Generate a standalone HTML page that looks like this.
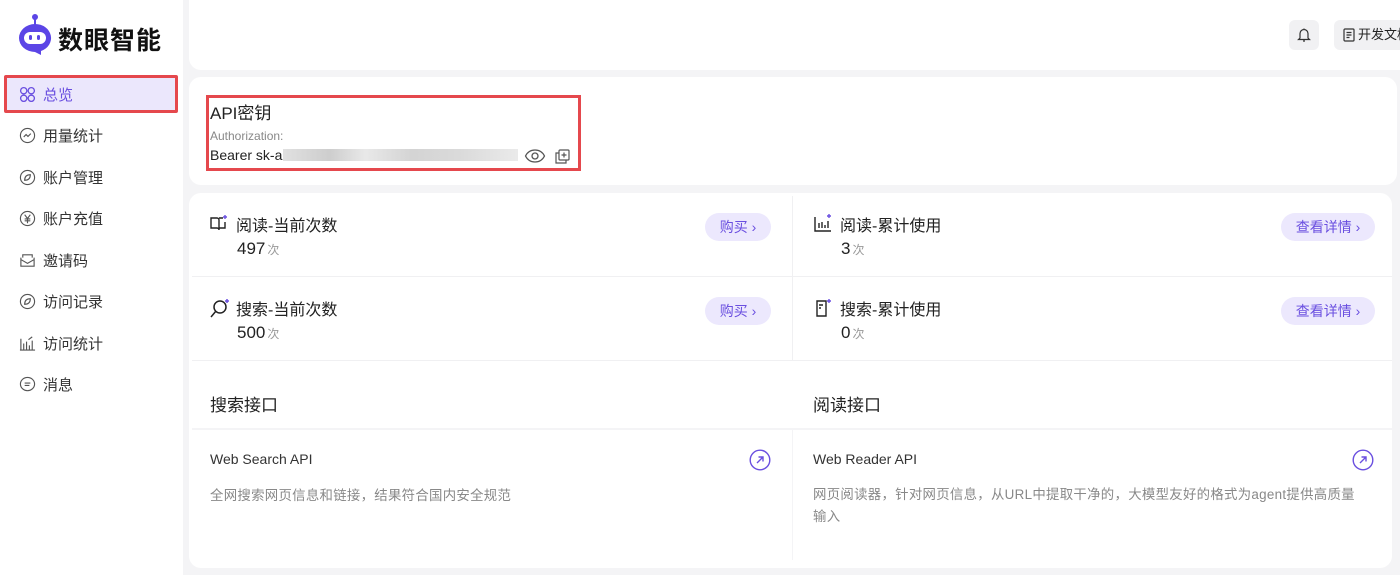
<!DOCTYPE html>
<html><head><meta charset="utf-8"><style>
*{margin:0;padding:0;box-sizing:border-box}
body{width:1400px;height:575px;overflow:hidden;background:#f4f4f6;font-family:"Liberation Sans","Noto Sans CJK SC",sans-serif;color:#222;position:relative}
.abs{position:absolute}
.side{left:0;top:0;width:183px;height:575px;background:#fff}
.nav{position:absolute;left:19px;font-size:15px;color:#333;display:flex;align-items:center;gap:7px}
.nav svg{width:17px;height:17px}
.card{position:absolute;background:#fff;border-radius:12px}
.btn{position:absolute;background:#ece8fd;color:#6a4fe0;font-size:14px;border-radius:14px;height:28px;line-height:28px;text-align:center}
.lbl{position:absolute;font-size:16px;color:#222}
.num{position:absolute;font-size:17px;color:#222}
.num span{font-size:12px;color:#999;margin-left:2px}
.ic{position:absolute}
</style></head><body>
<div class="abs side"></div>
<svg class="abs" style="left:18px;top:13px" width="36" height="42" viewBox="0 0 36 42"><circle cx="17" cy="4" r="3" fill="#5b45e6"/><rect x="16" y="5" width="2" height="7" fill="#5b45e6"/><path d="M17 11a16 14 0 1 0 0 28l6 3v-4a16 14 0 0 0-6-27z" fill="#5b45e6"/><rect x="6" y="19" width="22" height="12" rx="6" fill="#fff"/><rect x="11" y="22" width="3" height="5" rx="1.5" fill="#5b45e6"/><rect x="19" y="22" width="3" height="5" rx="1.5" fill="#5b45e6"/></svg>
<div class="abs" style="left:58px;top:21px;font-size:25px;font-weight:bold;color:#111;letter-spacing:1px">数眼智能</div>
<div class="abs" style="left:4px;top:75px;width:174px;height:38px;background:#ebe7fc;border:3px solid #e5484d;border-radius:2px"></div>
<div class="nav" style="top:84px;color:#6a4fe0"><svg viewBox="0 0 18 18" fill="none" stroke="#6a4fe0" stroke-width="1.4"><circle cx="5" cy="5" r="3.3"/><circle cx="13" cy="5" r="3.3"/><circle cx="5" cy="13" r="3.3"/><circle cx="13" cy="13" r="3.3"/></svg>总览</div>
<div class="nav" style="top:125px"><svg viewBox="0 0 18 18" fill="none" stroke="#555" stroke-width="1.2"><circle cx="9" cy="9" r="7.5"/><path d="M5 10.5l2.5-2.5 2 2 3-3"/></svg>用量统计</div>
<div class="nav" style="top:167px"><svg viewBox="0 0 18 18" fill="none" stroke="#555" stroke-width="1.2"><circle cx="9" cy="9" r="7.5"/><path d="M6 12c0-4 2-6 6-6 0 4-2 6-6 6z"/></svg>账户管理</div>
<div class="nav" style="top:208px"><svg viewBox="0 0 18 18" fill="none" stroke="#555" stroke-width="1.2"><circle cx="9" cy="9" r="7.5"/><path d="M6 5l3 4 3-4M9 9v5M6 9.5h6M6 11.5h6"/></svg>账户充值</div>
<div class="nav" style="top:250px"><svg viewBox="0 0 18 18" fill="none" stroke="#555" stroke-width="1.2"><path d="M2 6v9h14V6M2 8l7 4 7-4M4 6V3h10v3"/></svg>邀请码</div>
<div class="nav" style="top:291px"><svg viewBox="0 0 18 18" fill="none" stroke="#555" stroke-width="1.2"><circle cx="9" cy="9" r="7.5"/><path d="M6 12c0-4 2-6 6-6 0 4-2 6-6 6z"/></svg>访问记录</div>
<div class="nav" style="top:333px"><svg viewBox="0 0 18 18" fill="none" stroke="#555" stroke-width="1.2"><path d="M1 16h16M2 16V4M5 16V9M8 16V7M11 16v-5M14 16V6M10 5l4-3"/></svg>访问统计</div>
<div class="nav" style="top:374px"><svg viewBox="0 0 18 18" fill="none" stroke="#555" stroke-width="1.2"><ellipse cx="9" cy="8.5" rx="7.5" ry="7"/><path d="M6 7.5h6M6 10h5"/></svg>消息</div>

<div class="card" style="left:189px;top:0;width:1230px;height:70px;border-radius:0 0 12px 12px"></div>
<div class="abs" style="left:1289px;top:20px;width:30px;height:30px;background:#f1f1f3;border-radius:6px"></div>
<svg class="abs" style="left:1297px;top:27px" width="14" height="16" viewBox="0 0 14 16" fill="none" stroke="#333" stroke-width="1.2"><path d="M3 11V6.5a4 4 0 0 1 8 0V11l1.5 1.5h-11zM6 14h2M7 1.5v1"/></svg>
<div class="abs" style="left:1334px;top:20px;width:80px;height:30px;background:#f1f1f3;border-radius:6px;font-size:13px;line-height:30px;padding-left:24px">开发文档</div>
<svg class="abs" style="left:1343px;top:28px" width="12" height="14" viewBox="0 0 12 14" fill="none" stroke="#333" stroke-width="1.2"><rect x="1" y="1" width="10" height="12" rx="1"/><path d="M3.5 4.5h5M3.5 7h5M3.5 9.5h3"/></svg>

<div class="card" style="left:189px;top:77px;width:1208px;height:108px"></div>
<div class="abs" style="left:206px;top:95px;width:375px;height:76px;border:3px solid #e5484d"></div>
<div class="abs" style="left:210px;top:99px;font-size:17px;color:#222">API密钥</div>
<div class="abs" style="left:210px;top:129px;font-size:12px;color:#888">Authorization:</div>
<div class="abs" style="left:210px;top:147px;font-size:14px;color:#222">Bearer sk-a</div>
<div class="abs" style="left:283px;top:149px;width:235px;height:12px;background:linear-gradient(90deg,#ddd,#c8c8c8 20%,#e6e6e6 35%,#cfcfcf 55%,#d6d6d6 75%,#e8e8e8);opacity:.9"></div>
<svg class="abs" style="left:524px;top:148px" width="22" height="16" viewBox="0 0 22 16" fill="none" stroke="#555" stroke-width="1.3"><path d="M1.5 8C4 3 8 2 11 2s7 1 9.5 6c-2.5 5-6.5 6-9.5 6S4 13 1.5 8z"/><circle cx="11" cy="8" r="3"/></svg>
<svg class="abs" style="left:555px;top:149px" width="15" height="15" viewBox="0 0 15 15" fill="none" stroke="#555" stroke-width="1.2"><rect x="4" y="1" width="10" height="10" rx="1"/><path d="M4 4H1v10h10v-3M9 3.5v5M6.5 6h5"/></svg>

<div class="card" style="left:189px;top:193px;width:1203px;height:375px"></div>
<div class="abs" style="left:192px;top:276px;width:1200px;height:1px;background:#f0f0f2"></div>
<div class="abs" style="left:192px;top:360px;width:1200px;height:1px;background:#f0f0f2"></div>
<div class="abs" style="left:792px;top:196px;width:1px;height:164px;background:#f0f0f2"></div>
<div class="abs" style="left:192px;top:428px;width:1200px;height:2px;background:#f4f4f6"></div>
<div class="abs" style="left:792px;top:430px;width:1px;height:130px;background:#f4f4f6"></div>

<svg class="ic" style="left:209px;top:214px" width="20" height="20" viewBox="0 0 20 20" fill="none" stroke="#222" stroke-width="1.4"><path d="M2 4h6a2 2 0 0 1 2 2v10a2 2 0 0 0-2-2H2zM14 4h-4M16 8v6h-6M10 6v10"/><path d="M16 1v4M14 3h4" stroke="#6a4fe0"/></svg>
<div class="lbl" style="left:236px;top:212px">阅读-当前次数</div>
<div class="num" style="left:237px;top:239px">497<span>次</span></div>
<div class="btn" style="left:705px;top:213px;width:66px">购买 ›</div>

<svg class="ic" style="left:209px;top:298px" width="22" height="22" viewBox="0 0 22 22" fill="none" stroke="#222" stroke-width="1.5"><circle cx="11" cy="9" r="6"/><path d="M7 13l-5 6"/><path d="M18 1v4M16 3h4" stroke="#6a4fe0"/></svg>
<div class="lbl" style="left:236px;top:296px">搜索-当前次数</div>
<div class="num" style="left:237px;top:323px">500<span>次</span></div>
<div class="btn" style="left:705px;top:297px;width:66px">购买 ›</div>

<svg class="ic" style="left:813px;top:213px" width="20" height="20" viewBox="0 0 20 20" fill="none" stroke="#222" stroke-width="1.4"><path d="M2 4v14h16M6 15v-5M9 15V9M12 15v-3M15 15V8"/><path d="M16 1v4M14 3h4" stroke="#6a4fe0"/></svg>
<div class="lbl" style="left:840px;top:212px">阅读-累计使用</div>
<div class="num" style="left:841px;top:239px">3<span>次</span></div>
<div class="btn" style="left:1281px;top:213px;width:94px">查看详情 ›</div>

<svg class="ic" style="left:814px;top:298px" width="20" height="20" viewBox="0 0 20 20" fill="none" stroke="#222" stroke-width="1.4"><path d="M3 3h9v15H3zM5 7h4M5 10h2"/><path d="M15 1v4M13 3h4" stroke="#6a4fe0"/></svg>
<div class="lbl" style="left:840px;top:296px">搜索-累计使用</div>
<div class="num" style="left:841px;top:323px">0<span>次</span></div>
<div class="btn" style="left:1281px;top:297px;width:94px">查看详情 ›</div>

<div class="abs" style="left:210px;top:391px;font-size:17px">搜索接口</div>
<div class="abs" style="left:813px;top:391px;font-size:17px">阅读接口</div>
<div class="abs" style="left:210px;top:451px;font-size:14px;color:#333">Web Search API</div>
<div class="abs" style="left:813px;top:451px;font-size:14px;color:#333">Web Reader API</div>
<svg class="abs" style="left:749px;top:449px" width="22" height="22" viewBox="0 0 22 22" fill="none" stroke="#6a4fe0" stroke-width="1.4"><circle cx="11" cy="11" r="9.8"/><path d="M8 14l6-6M9.5 8H14v4.5"/></svg>
<svg class="abs" style="left:1352px;top:449px" width="22" height="22" viewBox="0 0 22 22" fill="none" stroke="#6a4fe0" stroke-width="1.4"><circle cx="11" cy="11" r="9.8"/><path d="M8 14l6-6M9.5 8H14v4.5"/></svg>
<div class="abs" style="left:210px;top:484px;font-size:13.4px;color:#888;letter-spacing:0.3px">全网搜索网页信息和链接，结果符合国内安全规范</div>
<div class="abs" style="left:813px;top:484px;width:552px;font-size:13.4px;color:#888;line-height:22px;letter-spacing:0.3px">网页阅读器，针对网页信息，从URL中提取干净的，大模型友好的格式为agent提供高质量<br>输入</div>
</body></html>
